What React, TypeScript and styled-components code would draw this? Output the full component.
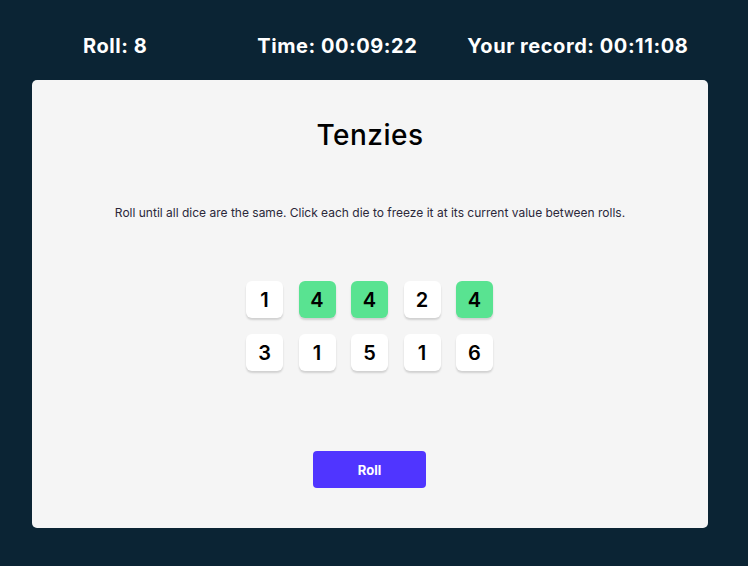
import React from "react";
import styled, { createGlobalStyle } from "styled-components";

const Global = createGlobalStyle`
  html, body { margin: 0; padding: 0; background: #0B2434; }
  body { font-family: Inter, "Liberation Sans", sans-serif; }
  * { box-sizing: border-box; }
`;

const Page = styled.div`
  width: 748px;
  height: 566px;
  display: flex;
  flex-direction: column;
  padding: 0 40px 38px 32px;
`;

const Stats = styled.header`
  height: 80px;
  display: flex;
  align-items: center;
  padding-left: 51px;
  padding-top: 12px;
`;

const Stat = styled.span<{ $gap: number }>`
  color: #ffffff;
  font-family: Inter, "Liberation Sans", sans-serif;
  font-weight: 700;
  font-size: 20px;
  letter-spacing: 0.55px;
  margin-left: ${(p) => p.$gap}px;
`;

const Board = styled.main`
  flex: 1;
  background: #F5F5F5;
  border-radius: 5px;
  display: flex;
  flex-direction: column;
  align-items: center;
  padding-top: 38px;
`;

const Title = styled.h1`
  margin: 0;
  font-size: 28px;
  line-height: 34px;
  font-weight: 500;
  color: #000;
  letter-spacing: 0.5px;
`;

const Instructions = styled.p`
  margin: 53px 0 0;
  font-size: 12px;
  line-height: 16px;
  color: #2B283A;
  font-weight: 400;
`;

const DiceGrid = styled.div`
  margin-top: 60px;
  display: grid;
  grid-template-columns: repeat(5, 37px);
  column-gap: 15.5px;
  row-gap: 16px;
  margin-left: -1px;
`;

const Die = styled.button<{ $held: boolean }>`
  width: 37px;
  height: 37px;
  border: none;
  border-radius: 6px;
  background: ${(p) => (p.$held ? "#59E391" : "#FFFFFF")};
  box-shadow: 0 2px 2px rgba(0, 0, 0, 0.15);
  font-family: Inter, "Liberation Sans", sans-serif;
  font-size: 20px;
  font-weight: 600;
  color: #000;
  display: flex;
  align-items: center;
  justify-content: center;
  padding: 0;
  cursor: pointer;
`;

const RollButton = styled.button`
  margin-top: 80px;
  margin-right: 1px;
  width: 113px;
  height: 37px;
  border: none;
  border-radius: 4px;
  background: #5035FF;
  color: #fff;
  font-family: Inter, "Liberation Sans", sans-serif;
  font-size: 13px;
  font-weight: 700;
  cursor: pointer;
`;

const dice = [
  { v: 1, h: false },
  { v: 4, h: true },
  { v: 4, h: true },
  { v: 2, h: false },
  { v: 4, h: true },
  { v: 3, h: false },
  { v: 1, h: false },
  { v: 5, h: false },
  { v: 1, h: false },
  { v: 6, h: false },
];

export default function App() {
  return (
    <>
      <Global />
      <Page>
        <Stats>
          <Stat $gap={0}>Roll: 8</Stat>
          <Stat $gap={110}>Time: 00:09:22</Stat>
          <Stat $gap={50}>Your record: 00:11:08</Stat>
        </Stats>
        <Board>
          <Title>Tenzies</Title>
          <Instructions>
            Roll until all dice are the same. Click each die to freeze it at its current value between rolls.
          </Instructions>
          <DiceGrid>
            {dice.map((d, i) => (
              <Die key={i} $held={d.h}>
                {d.v}
              </Die>
            ))}
          </DiceGrid>
          <RollButton>Roll</RollButton>
        </Board>
      </Page>
    </>
  );
}
